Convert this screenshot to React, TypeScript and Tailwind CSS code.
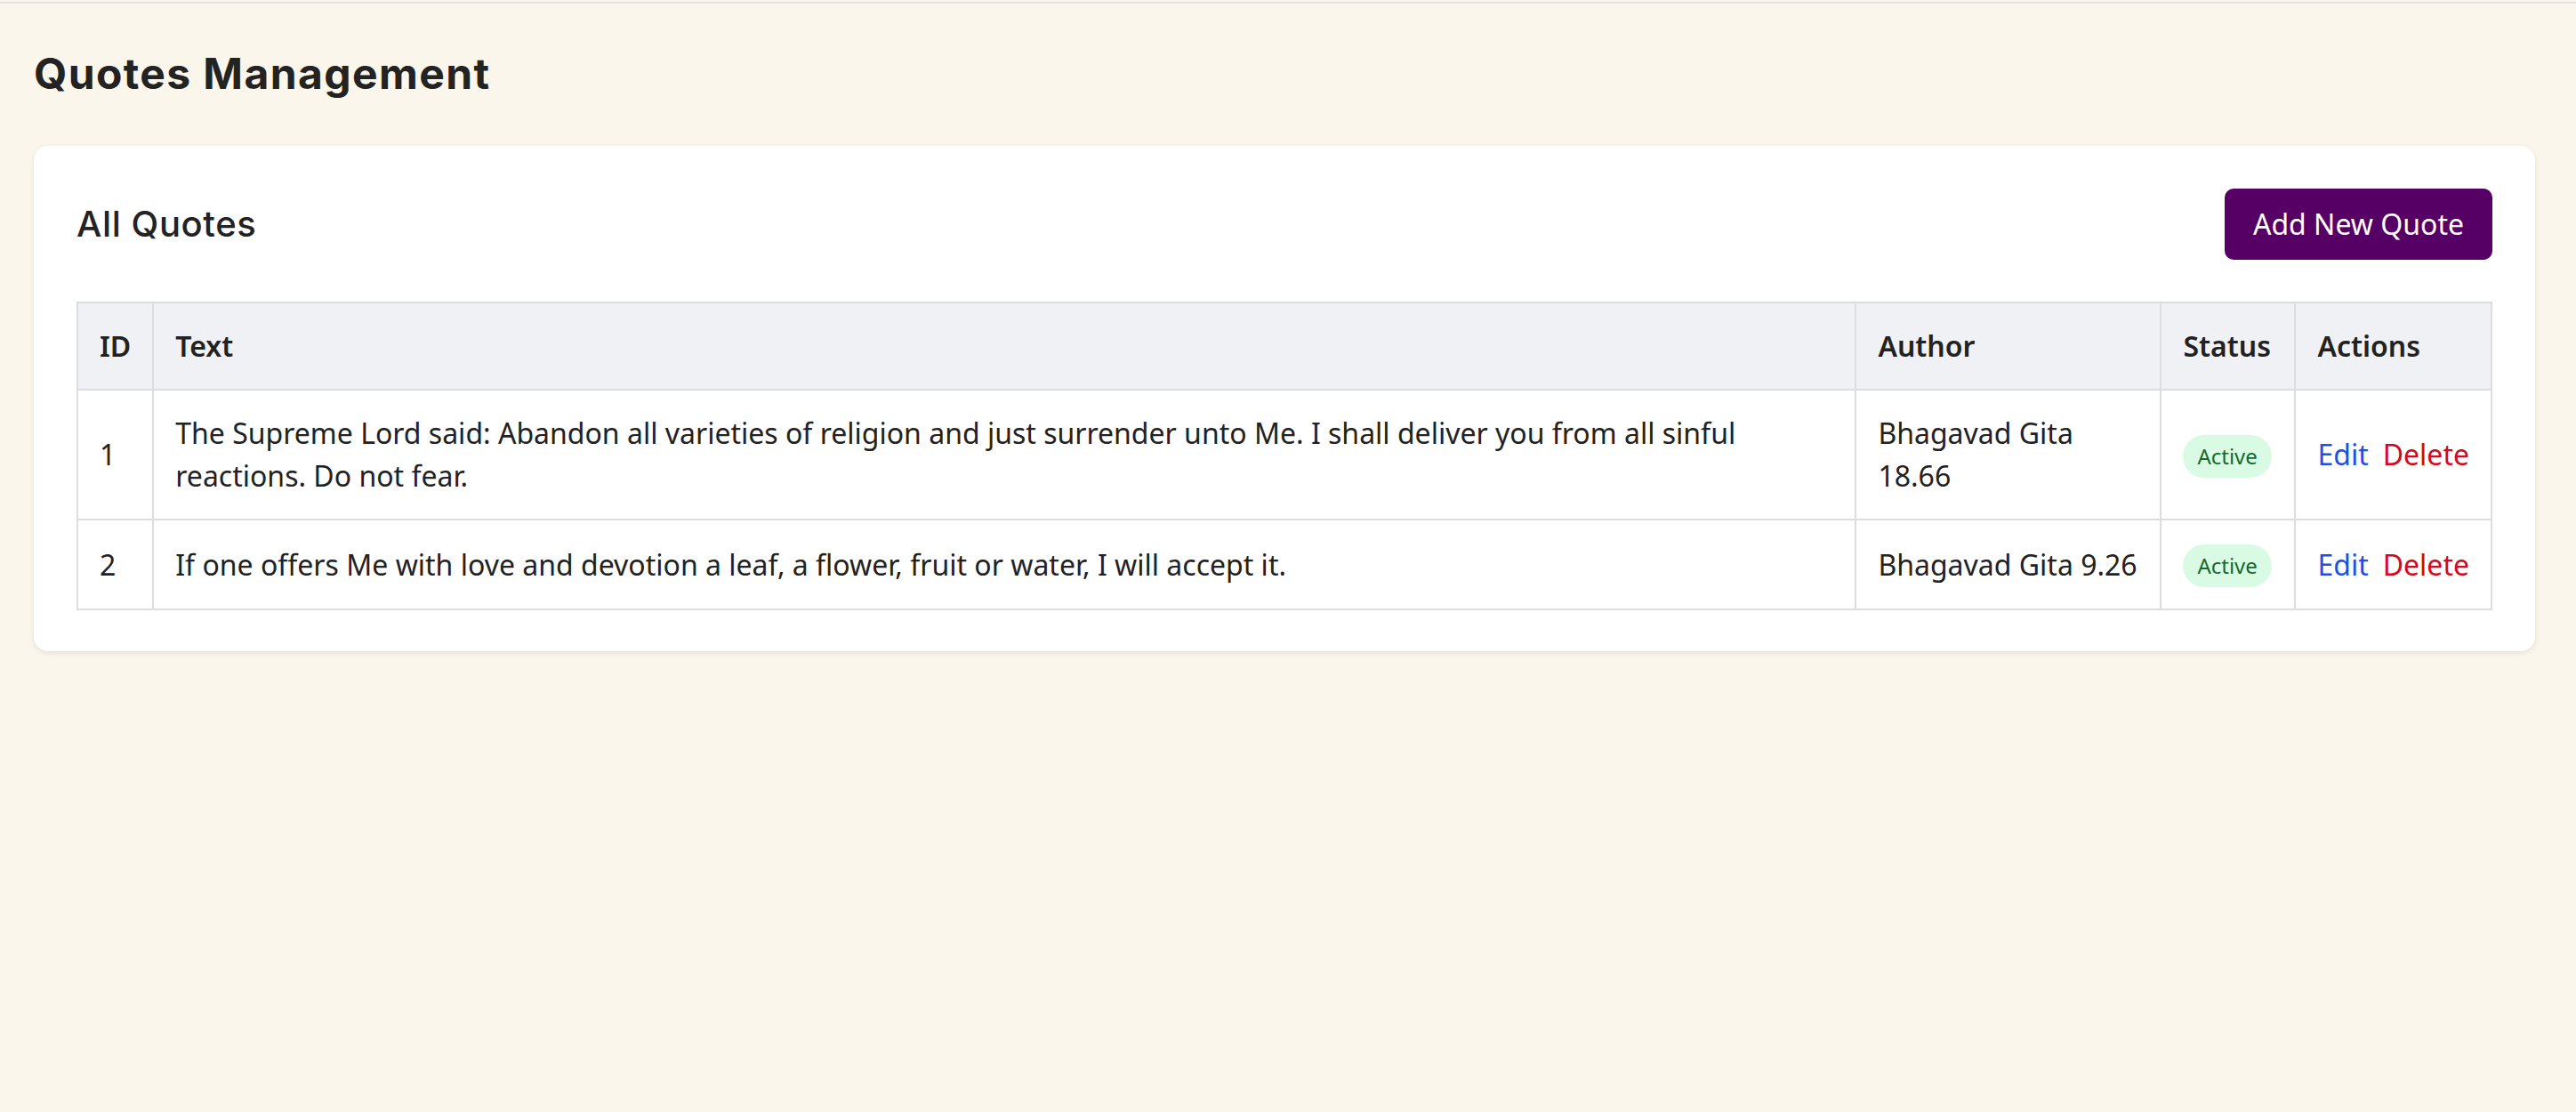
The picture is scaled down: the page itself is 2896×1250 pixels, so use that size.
import React from 'react';

interface Quote {
  id: number;
  text: string;
  author: string;
  active: boolean;
}

const quotes: Quote[] = [
  {
    id: 1,
    text: 'The Supreme Lord said: Abandon all varieties of religion and just surrender unto Me. I shall deliver you from all sinful reactions. Do not fear.',
    author: 'Bhagavad Gita 18.66',
    active: true,
  },
  {
    id: 2,
    text: 'If one offers Me with love and devotion a leaf, a flower, fruit or water, I will accept it.',
    author: 'Bhagavad Gita 9.26',
    active: true,
  },
];

const headFont = { fontFamily: 'Inter, "Noto Sans", sans-serif' };

export default function App() {
  return (
    <div
      className="min-h-[1250px] bg-[#faf6eb] text-[#222222]"
      style={{ fontFamily: '"Noto Sans", "Open Sans", sans-serif' }}
    >
      <div className="pt-[2px]">
        <div className="h-[2px] bg-[#e1e4e9]" />
      </div>

      <div className="pl-[38px] pr-[46px]">
        <h1
          className="pt-[43px] pb-[45px] text-[48px] leading-[72px] font-bold tracking-[1.4px] text-[#232323]"
          style={headFont}
        >
          Quotes Management
        </h1>

        <div className="rounded-[16px] bg-white p-[48px] pb-[46px] shadow-[0_2px_6px_rgba(0,0,0,0.09)]">
          <div className="mb-[47px] flex items-center justify-between">
            <h2 className="text-[40px] leading-[56px] font-medium tracking-[0.6px] text-[#232323]" style={headFont}>
              All Quotes
            </h2>
            <button className="h-[80px] rounded-[10px] bg-[#560066] px-[32px] text-[32px] leading-[48px] text-white">
              Add New Quote
            </button>
          </div>

          <table className="w-full border-collapse text-[32px] leading-[48px]">
            <thead>
              <tr className="bg-[#f0f1f4]">
                <th className="w-[81px] border-2 border-[#dddddd] px-[24px] py-[24px] text-left font-semibold">ID</th>
                <th className="border-2 border-[#dddddd] px-[24px] py-[24px] text-left font-semibold">Text</th>
                <th className="w-[343px] border-2 border-[#dddddd] px-[24px] py-[24px] text-left font-semibold">Author</th>
                <th className="w-[151px] border-2 border-[#dddddd] px-[24px] py-[24px] text-left font-semibold">Status</th>
                <th className="w-[220px] border-2 border-[#dddddd] px-[24px] py-[24px] text-left font-semibold">Actions</th>
              </tr>
            </thead>
            <tbody>
              {quotes.map((q) => (
                <tr key={q.id}>
                  <td className="border-2 border-[#dddddd] px-[24px] py-[24px]">{q.id}</td>
                  <td className="border-2 border-[#dddddd] px-[24px] py-[24px]">{q.text}</td>
                  <td className="border-2 border-[#dddddd] px-[24px] py-[24px]">{q.author}</td>
                  <td className="border-2 border-[#dddddd] px-[24px] py-[24px]">
                    <span className="inline-block rounded-full bg-[#d9fbe3] px-[16px] py-[8px] text-[24px] leading-[32px] text-[#17692f]">
                      {q.active ? 'Active' : 'Inactive'}
                    </span>
                  </td>
                  <td className="whitespace-nowrap border-2 border-[#dddddd] px-[24px] py-[24px]">
                    <button className="mr-[16px] text-[#1f4fe5]">Edit</button>
                    <button className="text-[#d3091e]">Delete</button>
                  </td>
                </tr>
              ))}
            </tbody>
          </table>
        </div>
      </div>
    </div>
  );
}
